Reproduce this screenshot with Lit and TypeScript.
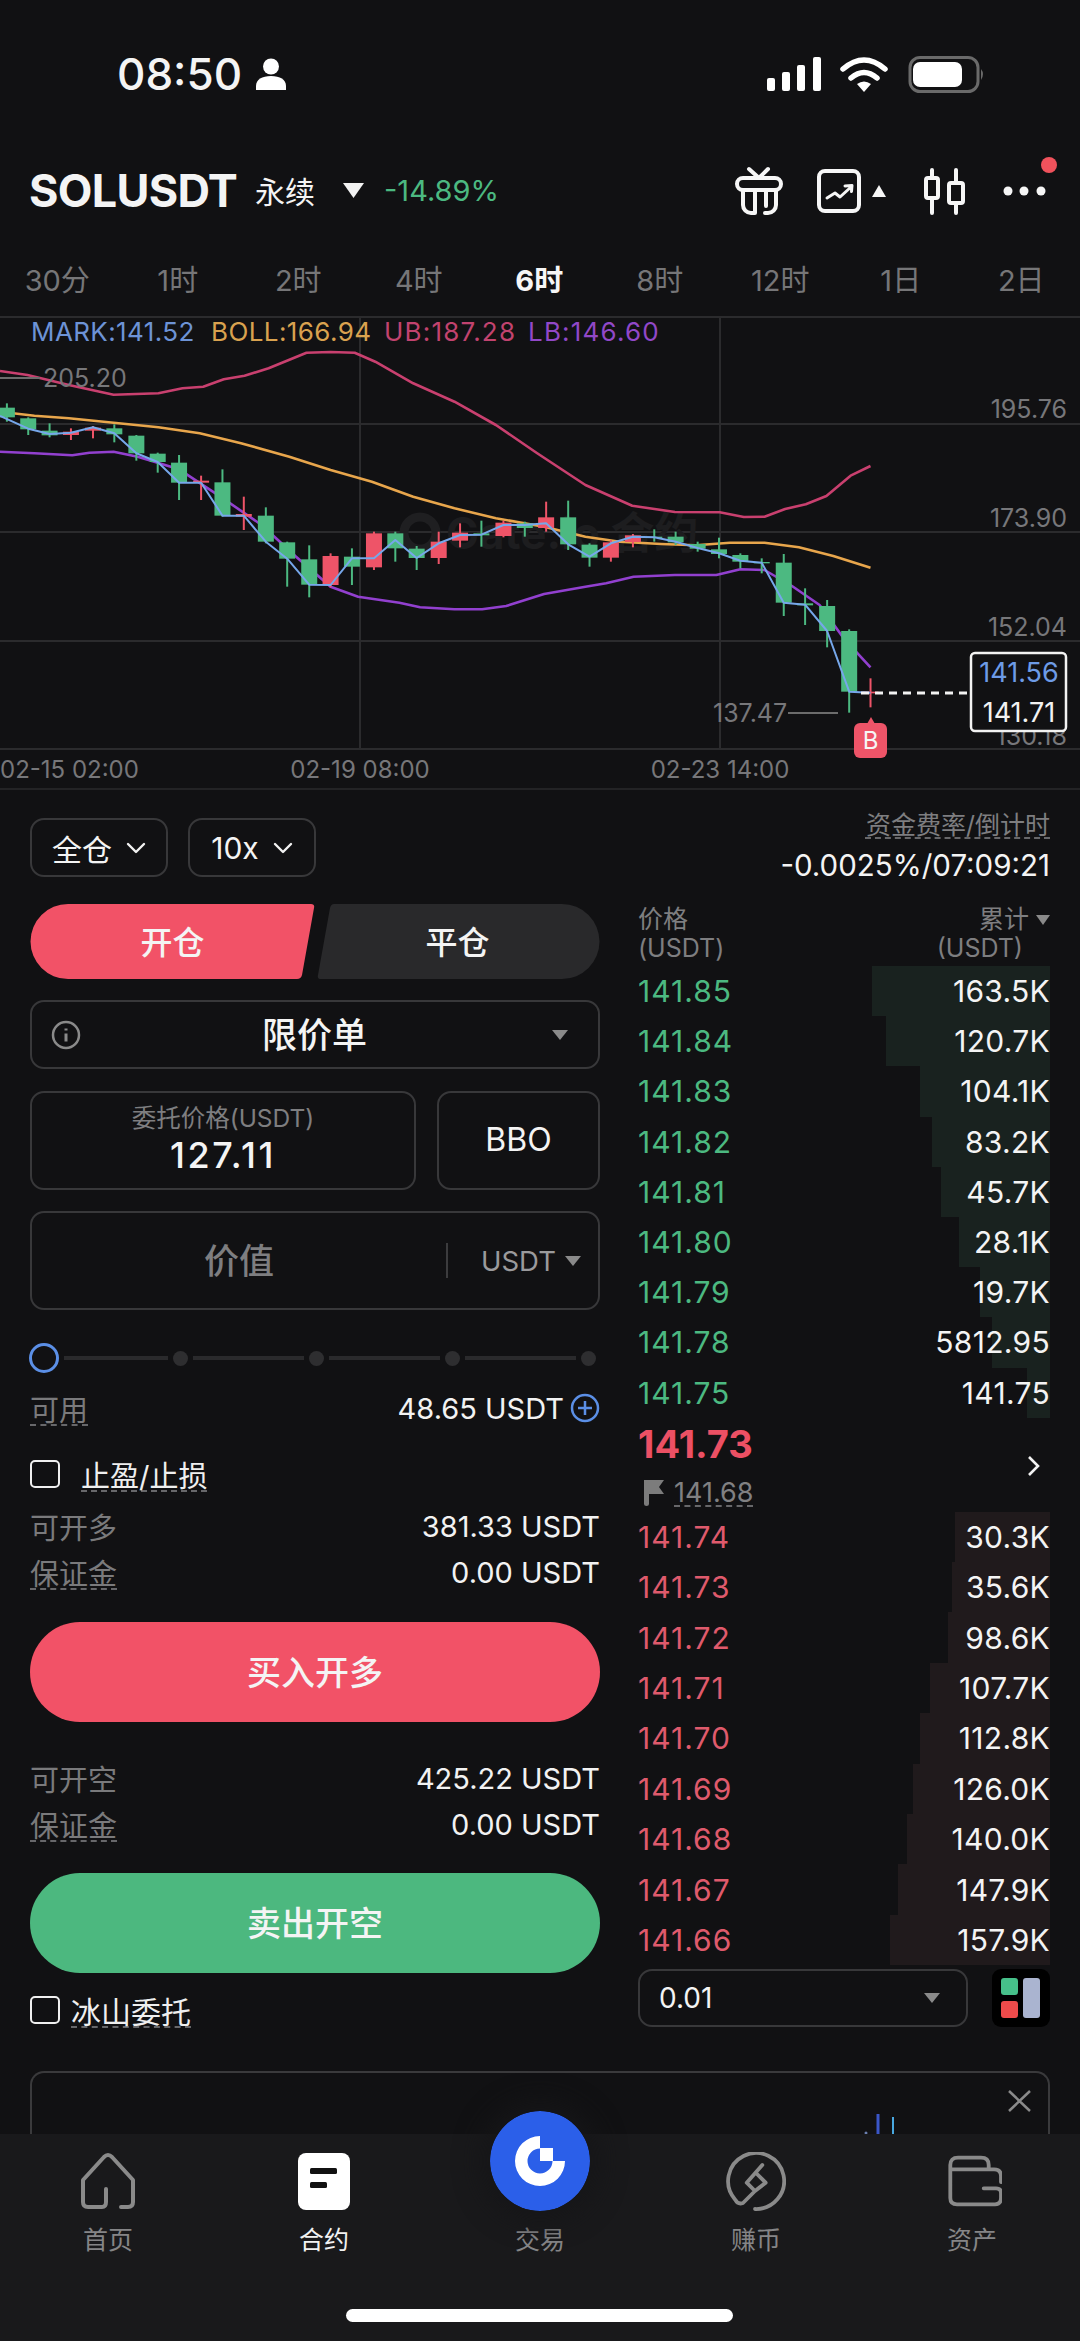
import { LitElement, html, css, svg } from 'lit';
import { customElement } from 'lit/decorators.js';

// Chart data was read off a crop: x in crop px (1.452 per px), y in crop px (3 per px, from y=310)
const cx = (x: number) => x / 1.452;
const cy = (y: number) => 310 + y / 3;
const pts = (list: number[][]) => list.map(([x, y]) => `${cx(x).toFixed(1)},${cy(y).toFixed(1)}`).join(' ');

const UP = '#4cb981';
const DOWN = '#ee5468';

// x, high, body top, body bottom, low, colour
const CANDLES: [number, number, number, number, number, string][] = [
  [10, 280, 293, 322, 335, UP], [41, 322, 325, 358, 375, UP], [72, 340, 362, 376, 382, UP],
  [103, 355, 365, 375, 390, DOWN], [135, 348, 353, 362, 385, DOWN], [166, 343, 355, 373, 397, UP],
  [198, 375, 377, 430, 452, UP], [229, 428, 431, 456, 488, UP], [260, 435, 458, 518, 570, UP],
  [292, 497, 512, 518, 570, DOWN], [323, 478, 517, 617, 620, UP], [354, 560, 612, 620, 660, DOWN],
  [386, 592, 617, 695, 700, UP], [417, 695, 697, 746, 830, UP], [449, 706, 748, 824, 862, UP],
  [480, 730, 738, 825, 832, DOWN], [511, 715, 740, 770, 825, UP], [543, 665, 670, 772, 780, DOWN],
  [574, 665, 670, 715, 755, UP], [605, 708, 716, 744, 780, UP], [637, 665, 695, 744, 762, DOWN],
  [668, 640, 668, 692, 712, DOWN], [699, 632, 670, 676, 710, UP], [731, 632, 638, 678, 682, DOWN],
  [762, 635, 640, 654, 680, UP], [793, 575, 622, 654, 665, DOWN], [825, 572, 622, 703, 720, UP],
  [856, 700, 704, 743, 770, UP], [887, 690, 697, 743, 755, DOWN], [919, 672, 676, 696, 712, DOWN],
  [950, 658, 680, 684, 695, UP], [981, 665, 680, 697, 705, UP], [1013, 695, 702, 716, 725, UP],
  [1044, 683, 718, 732, 745, UP], [1075, 730, 735, 755, 775, UP], [1106, 745, 756, 760, 790, UP],
  [1138, 732, 758, 878, 918, UP], [1169, 835, 880, 886, 945, UP], [1201, 870, 888, 963, 1012, UP],
  [1233, 958, 963, 1145, 1208, UP], [1264, 1105, 1145, 1150, 1192, DOWN],
];

const UB_LINE = [[0,183],[40,195],[100,225],[165,254],[230,250],[265,235],[295,230],[325,208],[355,197],[390,175],[445,128],[480,126],[515,128],[545,155],[600,220],[660,275],[720,345],[780,430],[850,525],[918,587],[980,606],[1045,607],[1080,621],[1110,620],[1140,597],[1170,583],[1200,558],[1235,497],[1264,468]];
const BOLL_LINE = [[0,305],[50,317],[100,325],[165,338],[230,352],[290,370],[350,400],[420,440],[480,480],[540,515],[600,560],[660,595],[720,625],[790,650],[850,680],[900,695],[960,702],[1010,706],[1060,698],[1110,698],[1160,712],[1210,738],[1264,773]];
const LB_LINE = [[0,425],[50,430],[105,436],[130,428],[165,425],[200,440],[260,478],[320,560],[380,645],[430,740],[480,830],[520,860],[580,878],[610,892],[660,898],[700,898],[735,888],[790,852],[850,830],[880,820],[920,800],[980,795],[1040,795],[1075,778],[1110,780],[1150,828],[1190,885],[1225,985],[1264,1072]];
const MARK_LINE = [[0,318],[41,356],[72,372],[103,368],[135,352],[166,370],[198,430],[229,456],[260,518],[292,518],[323,617],[354,617],[386,695],[417,746],[449,824],[480,825],[511,745],[543,745],[574,690],[605,744],[637,700],[668,675],[699,674],[731,645],[762,645],[793,640],[825,703],[856,740],[887,700],[919,680],[950,682],[981,695],[1013,714],[1044,730],[1075,752],[1106,758],[1138,878],[1169,884],[1201,963],[1233,1145],[1264,1148]];

const TIMEFRAMES = ['30分', '1时', '2时', '4时', '6时', '8时', '12时', '1日', '2日'];

const ASKS: [string, string, number][] = [
  ['141.85', '163.5K', 872], ['141.84', '120.7K', 886], ['141.83', '104.1K', 920],
  ['141.82', '83.2K', 932], ['141.81', '45.7K', 941], ['141.80', '28.1K', 959],
  ['141.79', '19.7K', 980], ['141.78', '5812.95', 992], ['141.75', '141.75', 1027],
];
const BIDS: [string, string, number][] = [
  ['141.74', '30.3K', 955], ['141.73', '35.6K', 952], ['141.72', '98.6K', 948],
  ['141.71', '107.7K', 930], ['141.70', '112.8K', 920], ['141.69', '126.0K', 913],
  ['141.68', '140.0K', 907], ['141.67', '147.9K', 898], ['141.66', '157.9K', 890],
];

const chevron = html`<svg class="chev" viewBox="0 0 20 12"><path d="M2 2l8 8 8-8" fill="none" stroke="#f2f2f2" stroke-width="2.4" stroke-linecap="round" stroke-linejoin="round"/></svg>`;

@customElement('app-root')
export class AppRoot extends LitElement {
  private _chart() {
    return html`<svg class="chart" viewBox="0 316 1080 474">
      ${[317, 424, 532, 641, 749].map((y) => svg`<line x1="0" x2="1080" y1=${y} y2=${y} stroke="#2b2b2d" stroke-width="2"/>`)}
      ${[360, 720].map((x) => svg`<line x1=${x} x2=${x} y1="317" y2="749" stroke="#2b2b2d" stroke-width="2"/>`)}
      <line x1="0" x2="1080" y1="789" y2="789" stroke="#232325" stroke-width="2"/>

      <circle cx="420" cy="533" r="16" fill="none" stroke="#1f1f21" stroke-width="9"/>
      <text x="446" y="549" class="wm">Gate.io 合约</text>

      <polyline points=${pts(UB_LINE)} fill="none" stroke="#c9406f" stroke-width="2.6" stroke-linejoin="round"/>
      <polyline points=${pts(LB_LINE)} fill="none" stroke="#9240cf" stroke-width="2.6" stroke-linejoin="round"/>
      <polyline points=${pts(BOLL_LINE)} fill="none" stroke="#e8a64c" stroke-width="2.6" stroke-linejoin="round"/>
      ${CANDLES.map(([x, hi, top, bot, lo, c]) => svg`
        <line x1=${cx(x)} x2=${cx(x)} y1=${cy(hi)} y2=${cy(lo)} stroke=${c} stroke-width="2"/>
        <rect x=${cx(x) - 8} y=${cy(top)} width="16" height=${(bot - top) / 3} fill=${c}/>`)}
      <polyline points=${pts(MARK_LINE)} fill="none" stroke="#76a7ea" stroke-width="2" stroke-linejoin="round"/>

      <text y="341" class="lg"><tspan x="31" fill="#6d93d6">MARK:141.52</tspan><tspan x="211" fill="#d9a24f">BOLL:166.94</tspan><tspan x="384" fill="#c2436f" class="wide">UB:187.28</tspan><tspan x="528" fill="#9148c8" class="wide">LB:146.60</tspan></text>

      <line x1="0" x2="40" y1="378" y2="378" stroke="#6c6c6c" stroke-width="2"/>
      <text x="43" y="387" class="ax">205.20</text>
      <text x="1067" y="418" class="ax end">195.76</text>
      <text x="1067" y="527" class="ax end">173.90</text>
      <text x="1067" y="636" class="ax end">152.04</text>
      <text x="1067" y="745" class="ax end">130.18</text>
      <text x="713" y="722" class="ax">137.47</text>
      <line x1="788" x2="838" y1="713" y2="713" stroke="#6c6c6c" stroke-width="2"/>

      <text x="0" y="778" class="dt">02-15 02:00</text>
      <text x="360" y="778" class="dt mid">02-19 08:00</text>
      <text x="720" y="778" class="dt mid">02-23 14:00</text>

      <line x1="861" x2="970" y1="693" y2="693" stroke="#f2f2f2" stroke-width="3" stroke-dasharray="8 6"/>
      <rect x="971" y="653" width="95" height="78" rx="4" fill="#111113" stroke="#f2f2f2" stroke-width="2.5"/>
      <text x="1019" y="682" class="box mid" fill="#6d9be6">141.56</text>
      <text x="1019" y="722" class="box mid" fill="#f2f2f2">141.71</text>

      <path d="M871 717l4 7h-8z" fill="#ee5468"/>
      <rect x="854" y="723" width="33" height="35" rx="6" fill="#ee5468"/>
      <text x="870.5" y="749" class="badge">B</text>
    </svg>`;
  }

  private _row(r: [string, string, number], side: string) {
    return html`<div class="ob-row ${side}">
      <span class="ob-bar" style="width:${1050 - r[2]}px"></span>
      <span class="ob-price">${r[0]}</span>
      <span class="ob-total">${r[1]}</span>
    </div>`;
  }

  protected override render() {
    return html`
      <div class="status">
        <span class="clock">08:50</span>
        <svg class="person" viewBox="0 0 30 32"><circle cx="15" cy="8.5" r="8"/><path d="M0 32v-4c0-6.5 6-10 15-10s15 3.500 15 10v4z"/></svg>
        <svg class="sys" viewBox="760 50 230 44">
          <rect x="767" y="76" width="8" height="13" rx="2" fill="#fff"/>
          <rect x="782" y="70" width="8" height="19" rx="2" fill="#fff"/>
          <rect x="797" y="63" width="8" height="26" rx="2" fill="#fff"/>
          <rect x="813" y="55" width="8" height="34" rx="2" fill="#fff"/>
          <path d="M843 67q21-18 42 0M851 76q13-11 26 0" fill="none" stroke="#fff" stroke-width="5.500" stroke-linecap="round"/>
          <path d="M864 90l-7-8q7-5 14 0z" fill="#fff"/>
          <rect x="910" y="55.500" width="68" height="34" rx="10" fill="none" stroke="#6a6a6a" stroke-width="3"/>
          <rect x="913" y="60" width="49" height="25" rx="7" fill="#fff"/>
          <path d="M981 67q4 5 0 11z" fill="#6a6a6a"/>
        </svg>
      </div>

      <div class="head">
        <span class="sym">SOLUSDT</span>
        <span class="perp">永续</span>
        <svg class="tri-down" viewBox="0 0 21 15"><path d="M0 0h21L10.500 15z" fill="#f2f2f2"/></svg>
        <span class="chg">-14.89%</span>
        <svg class="tools" viewBox="730 150 330 70" fill="none" stroke="#f6f6f6" stroke-width="4" stroke-linecap="round" stroke-linejoin="round">
          <path d="M749 169l10 9 9-9"/>
          <rect x="737" y="178" width="44" height="12" rx="6"/>
          <path d="M743 190v15a8 8 0 0 0 8 8h4v-21M776 190v15a8 8 0 0 1-8 8h-3M766 192v14"/>
          <rect x="819" y="171" width="40" height="40" rx="6"/>
          <path d="M827 198l8-5 5 4 11-10M845 186l7-.5-.5 6" stroke-width="3"/>
          <path d="M872 197l7-12 7 12z" fill="#f6f6f6" stroke="none"/>
          <path d="M932 170v8M932 198v15M956 170v13M956 203v10"/>
          <rect x="926" y="178" width="12" height="20" rx="2"/>
          <rect x="949" y="183" width="14" height="20" rx="2"/>
          <g fill="#f6f6f6" stroke="none"><circle cx="1008" cy="191" r="4.500"/><circle cx="1024" cy="191" r="4.500"/><circle cx="1041" cy="191" r="4.500"/></g>
          <circle cx="1049" cy="165" r="8" fill="#f0525c" stroke="none"/>
        </svg>
      </div>

      <div class="frames">
        ${TIMEFRAMES.map((t) => html`<span class=${t === '6时' ? 'on' : ''}>${t}</span>`)}
      </div>

      ${this._chart()}

      <div class="main">
        <div class="left">
          <div class="pills">
            <div class="pill p1">全仓 ${chevron}</div>
            <div class="pill p2">10x ${chevron}</div>
          </div>

          <div class="side">
            <svg viewBox="0 0 570 75">
              <path d="M38 0H281q4 0 3 4l-12 67q-1 4-5 4H38A37.500 37.500 0 0 1 38 0z" fill="#f25267"/>
              <path d="M304 0H532A37.500 37.500 0 0 1 532 75H291q-4 0-3-4l12-67q1-4 4-4z" fill="#29292b"/>
            </svg>
            <span>开仓</span><span>平仓</span>
          </div>

          <div class="box otype">
            <svg class="info" viewBox="0 0 30 30" fill="none" stroke="#8a8a8a" stroke-width="2.500"><circle cx="15" cy="15" r="13"/><path d="M15 13.500v8M15 8.500v2" stroke-width="3"/></svg>
            <span>限价单</span>
            <i class="tri"></i>
          </div>

          <div class="prow">
            <div class="box price"><small>委托价格(USDT)</small><b>127.11</b></div>
            <div class="box bbo">BBO</div>
          </div>

          <div class="box value">
            <span class="vlabel">价值</span>
            <span class="vunit">USDT<i class="tri"></i></span>
          </div>

          <div class="slider">
            <i class="knob"></i><i class="ln"></i><i class="dot"></i><i class="ln"></i><i class="dot"></i><i class="ln"></i><i class="dot"></i><i class="ln"></i><i class="dot"></i>
          </div>

          <div class="kv avail">
            <span class="k dash">可用</span>
            <span class="v"><span>48.65 USDT</span><svg class="plus" viewBox="0 0 30 30" fill="none" stroke="#5b8fe6" stroke-width="2.500"><circle cx="15" cy="15" r="13"/><path d="M8 15h14M15 8v14"/></svg></span>
          </div>

          <label class="check tp"><i class="cb"></i><span class="dash lite">止盈/止损</span></label>

          <div class="kv first"><span class="k">可开多</span><span class="v">381.33 USDT</span></div>
          <div class="kv"><span class="k dash">保证金</span><span class="v">0.00 USDT</span></div>
          <div class="cta buy"><span>买入开多</span></div>

          <div class="kv first2"><span class="k">可开空</span><span class="v">425.22 USDT</span></div>
          <div class="kv"><span class="k dash">保证金</span><span class="v">0.00 USDT</span></div>
          <div class="cta sell"><span>卖出开空</span></div>

          <label class="check ice"><i class="cb"></i><span class="dash lite">冰山委托</span></label>
        </div>

        <div class="right">
          <div class="fund"><span class="dash">资金费率/倒计时</span></div>
          <div class="fund-v">-0.0025%/07:09:21</div>
          <div class="ob-head">
            <div>价格<br />(USDT)</div>
            <div class="ob-head-r"><span>累计 <i class="tri"></i></span><span class="u">(USDT)</span></div>
          </div>
          ${ASKS.map((r) => this._row(r, 'ask'))}
          <div class="last">
            <span>141.73</span>
            <svg class="go" viewBox="0 0 14 22"><path d="M2 2l9 9-9 9" fill="none" stroke="#f2f2f2" stroke-width="2.600"/></svg>
          </div>
          <div class="mark">
            <svg viewBox="0 0 21 26"><path d="M1 0h20l-5 7 5 7H6v10q0 2-2.500 2T1 24z" fill="#7c7c7c"/></svg>
            <span class="dash">141.68</span>
          </div>
          ${BIDS.map((r) => this._row(r, 'bid'))}
          <div class="depth">
            <div class="box step"><span>0.01</span><i class="tri"></i></div>
            <svg class="layout" viewBox="0 0 58 58">
              <rect width="58" height="58" rx="9" fill="#000"/>
              <rect x="9" y="9" width="17" height="17" rx="3" fill="#46c08a"/>
              <rect x="9" y="32" width="17" height="17" rx="3" fill="#ee4b4b"/>
              <rect x="31" y="9" width="17" height="40" rx="3" fill="#aab4d0"/>
            </svg>
          </div>
        </div>
      </div>

      <div class="banner">
        <svg viewBox="0 0 1018 63">
          <path d="M979 20l21 20M1000 20l-21 20" fill="none" stroke="#8a8a8a" stroke-width="2.500"/>
          <path d="M848 63V43" stroke="#3a56c8" stroke-width="3"/>
          <path d="M863 63V46" stroke="#48a8e0" stroke-width="2"/>
          <circle cx="836" cy="62" r="1.500" fill="#6a7fb0"/>
        </svg>
      </div>

      <div class="nav">
        <div class="nav-item">
          <svg class="ni" viewBox="0 0 60 60" fill="none" stroke="#8a8a8a" stroke-width="4" stroke-linecap="round" stroke-linejoin="round">
            <path d="M28 37v13q0 5-4 5H10q-5 0-5-5V28L26 5q4-4 8 0l21 23v22q0 5-5 5h-7"/>
          </svg>
          <span>首页</span>
        </div>
        <div class="nav-item on">
          <svg class="ni" viewBox="0 0 60 60"><rect x="4" y="1" width="52" height="57" rx="8" fill="#fff"/><rect x="16" y="16" width="27" height="6" rx="1.500" fill="#111"/><rect x="16" y="30" width="17" height="6" rx="1.500" fill="#111"/></svg>
          <span>合约</span>
        </div>
        <div class="nav-item trade">
          <svg class="fab" viewBox="0 0 100 100">
            <circle cx="50" cy="50" r="50" fill="#2b5fe9"/>
            <path d="M50 25A25 25 0 1 0 75 50H62.500A12.500 12.500 0 1 1 50 37.500z" fill="#fff"/>
            <rect x="50" y="37" width="13" height="13" fill="#fff"/>
          </svg>
          <span>交易</span>
        </div>
        <div class="nav-item">
          <svg class="ni" viewBox="0 0 60 60" fill="none" stroke="#8a8a8a" stroke-width="3.800" stroke-linecap="round" stroke-linejoin="round">
            <path d="M29 57A28 28 0 1 0 9 47.400Q12 53 17 51L29 39 20.700 30.700 36.300 13M29 39L39.700 30.700 30 21"/>
          </svg>
          <span>赚币</span>
        </div>
        <div class="nav-item">
          <svg class="ni" viewBox="0 0 60 60" fill="none" stroke="#8a8a8a" stroke-width="3.800" stroke-linecap="round" stroke-linejoin="round">
            <path d="M8.300 17.300V13Q8.300 5.700 16 5.700H39Q46.700 5.700 46.700 13V17.300M8.300 17.300V46Q8.300 52.300 15 52.300H53Q59 52.300 59 46V41Q59 36.300 54 36.300H41.700M8.300 17.300H52Q59 17.300 59 24V30"/>
          </svg>
          <span>资产</span>
        </div>
        <div class="home-bar"></div>
      </div>
    `;
  }

  static override styles = css`
    :host {
      display: block;
      width: 1080px;
      height: 2341px;
      overflow: hidden;
      background: #111113;
      color: #f4f4f4;
      font-family: Inter, 'Noto Sans CJK SC', sans-serif;
    }
    svg {
      display: block;
    }

    .status {
      height: 148px;
      display: flex;
      align-items: center;
      padding-left: 117px;
    }
    .clock {
      font-size: 44px;
      font-weight: 500;
      width: 139px;
    }
    .person {
      width: 30px;
      height: 32px;
      fill: #fff;
    }
    .sys {
      width: 230px;
      height: 44px;
      margin-left: 474px;
    }

    .head {
      height: 84px;
      display: flex;
      align-items: center;
      padding-left: 29px;
    }
    .sym {
      font-size: 45px;
      font-weight: 700;
      letter-spacing: -0.7px;
      width: 226px;
    }
    .perp {
      font-size: 30px;
      width: 88px;
    }
    .tri-down {
      width: 21px;
      height: 15px;
    }
    .chg {
      margin-left: 20px;
      font-size: 29px;
      color: #4cb981;
      width: 116px;
    }
    .tools {
      width: 330px;
      height: 70px;
      margin: -10px 0 0 230px;
      overflow: visible;
    }

    .frames {
      height: 70px;
      margin: 11px 0 3px -3px;
      display: grid;
      grid-template-columns: repeat(9, 120.5px);
      align-items: center;
      justify-items: center;
      font-size: 29px;
      color: #767678;
    }
    .frames .on {
      color: #f6f6f6;
      font-weight: 700;
    }

    .chart {
      width: 1080px;
      height: 474px;
    }
    .lg {
      font-size: 26px;
      letter-spacing: 0.4px;
    }
    .wide {
      letter-spacing: 1.2px;
    }
    .ax {
      font-size: 25px;
      fill: #77777a;
    }
    .dt {
      font-size: 24px;
      fill: #77777a;
    }
    .end {
      text-anchor: end;
    }
    .mid {
      text-anchor: middle;
    }
    .wm {
      font-size: 44px;
      font-weight: 700;
      fill: #1d1d1f;
    }
    .box {
      font-size: 27px;
    }
    .badge {
      font-size: 24px;
      fill: #f6f6f6;
      text-anchor: middle;
    }

    .main {
      display: flex;
      gap: 38px;
      padding: 0 30px;
    }
    .left {
      width: 570px;
      padding-top: 28px;
    }
    .right {
      width: 412px;
      padding-top: 15px;
    }

    .pills {
      display: flex;
      gap: 20px;
    }
    .pill,
    div.box {
      border: 2px solid #38383a;
      border-radius: 14px;
      box-sizing: border-box;
      display: flex;
      align-items: center;
    }
    .pill {
      height: 59px;
      font-size: 30px;
      justify-content: center;
      gap: 14px;
    }
    .p1 {
      width: 138px;
    }
    .p2 {
      width: 128px;
    }
    .chev {
      width: 20px;
      height: 12px;
    }

    .side {
      position: relative;
      margin-top: 27px;
      height: 75px;
      display: flex;
      align-items: center;
      font-size: 32px;
      font-weight: 500;
    }
    .side svg {
      position: absolute;
      inset: 0;
      width: 570px;
      height: 75px;
    }
    .side span {
      position: relative;
      width: 285px;
      text-align: center;
      padding-bottom: 4px;
    }

    .otype {
      margin-top: 21px;
      height: 69px;
      padding: 0 30px 0 19px;
      justify-content: space-between;
      font-size: 35px;
      font-weight: 500;
    }
    .otype span {
      padding-bottom: 4px;
      margin-right: 4px;
    }
    .info {
      width: 30px;
      height: 30px;
    }
    i.tri {
      display: inline-block;
      width: 0;
      height: 0;
      border-left: 8px solid transparent;
      border-right: 8px solid transparent;
      border-top: 10px solid #8a8a8a;
    }

    .prow {
      margin-top: 22px;
      display: flex;
      gap: 21px;
    }
    .price {
      width: 386px;
      height: 99px;
      flex-direction: column;
      justify-content: center;
    }
    .price small {
      font-size: 24.500px;
      line-height: 32px;
      color: #7e7e80;
      margin-top: -3px;
    }
    .price b {
      font-size: 36px;
      line-height: 42px;
      font-weight: 500;
      letter-spacing: 2.500px;
    }
    .bbo {
      width: 163px;
      height: 99px;
      justify-content: center;
      font-size: 32px;
      padding-bottom: 2px;
    }

    .value {
      margin-top: 21px;
      height: 99px;
      position: relative;
    }
    .vlabel {
      width: 414px;
      text-align: center;
      font-size: 35px;
      font-weight: 500;
      color: #7e7e80;
      padding-bottom: 4px;
    }
    .vunit {
      border-left: 2px solid #3c3c3e;
      height: 35px;
      display: flex;
      align-items: center;
      gap: 9px;
      padding-left: 33px;
      font-size: 27.500px;
      color: #9a9a9c;
    }

    .slider {
      margin: 33px 0 0 -1px;
      height: 30px;
      display: flex;
      align-items: center;
      gap: 5px;
    }
    .knob {
      width: 30px;
      height: 30px;
      box-sizing: border-box;
      border: 3px solid #5b8fe6;
      border-radius: 50%;
    }
    .ln {
      width: 111px;
      height: 4px;
      background: #2a2a2c;
    }
    .knob + .ln {
      width: 104px;
    }
    .dot {
      width: 15px;
      height: 15px;
      border-radius: 50%;
      background: #2e2e30;
    }

    .kv {
      height: 46px;
      display: flex;
      align-items: center;
      justify-content: space-between;
      font-size: 29px;
    }
    .k {
      color: #7a7a7c;
    }
    .v {
      display: flex;
      align-items: center;
      gap: 6px;
      color: #f2f2f2;
      font-size: 29px;
    }
    .avail {
      margin-top: 12px;
    }
    .first {
      margin-top: 9px;
    }
    .first2 {
      margin-top: 33px;
    }
    .plus {
      width: 30px;
      height: 30px;
    }
    .dash {
      text-decoration: underline dashed #67676a 2px;
      text-underline-offset: 3px;
      text-decoration-skip-ink: none;
    }
    .lite {
      color: #efefef;
    }

    .check {
      display: flex;
      align-items: center;
      height: 40px;
      font-size: 29px;
    }
    .cb {
      width: 30px;
      height: 28px;
      box-sizing: border-box;
      border: 2.500px solid #f0f0f0;
      border-radius: 5px;
    }
    .tp {
      margin-top: 23px;
      gap: 21px;
    }
    .ice {
      margin-top: 17px;
      gap: 11px;
      font-size: 30px;
    }

    .cta {
      height: 100px;
      border-radius: 50px;
      display: flex;
      align-items: center;
      justify-content: center;
      font-size: 34px;
      font-weight: 500;
      margin-top: 27px;
    }
    .cta span {
      padding-bottom: 4px;
    }
    .buy {
      background: #f25267;
    }
    .sell {
      background: #4cb87f;
      margin-top: 26px;
    }

    .fund {
      height: 40px;
      text-align: right;
      font-size: 25px;
      color: #7e7e80;
    }
    .fund-v {
      height: 41px;
      line-height: 41px;
      text-align: right;
      font-size: 29.500px;
    }
    .ob-head {
      margin-top: 19px;
      height: 61px;
      display: flex;
      justify-content: space-between;
      font-size: 25px;
      line-height: 29px;
      color: #7e7e80;
    }
    .ob-head-r {
      display: flex;
      flex-direction: column;
      align-items: flex-end;
    }
    .ob-head-r i.tri {
      border-left-width: 7px;
      border-right-width: 7px;
      vertical-align: 3px;
    }
    .ob-head-r .u {
      margin-right: 27px;
    }
    .ob-row {
      position: relative;
      height: 50.200px;
      display: flex;
      align-items: center;
      justify-content: space-between;
      font-size: 30px;
    }
    .ob-row.bid {
      height: 50.400px;
    }
    .ob-bar {
      position: absolute;
      right: 0;
      top: 0;
      bottom: 0;
      background: #19221f;
    }
    .bid .ob-bar {
      background: #201a1c;
    }
    .ob-price,
    .ob-total {
      position: relative;
    }
    .ob-price {
      letter-spacing: 1px;
    }
    .ob-total {
      letter-spacing: 0.3px;
    }
    .ask .ob-price {
      color: #4cb981;
    }
    .bid .ob-price {
      color: #df5a6c;
    }
    .last {
      height: 52px;
      display: flex;
      align-items: center;
      justify-content: space-between;
      font-size: 38px;
      font-weight: 700;
      color: #ec5064;
      padding-right: 9px;
    }
    .go {
      width: 14px;
      height: 22px;
      margin-top: 44px;
    }
    .mark {
      height: 42px;
      box-sizing: border-box;
      padding: 4px 0 0 5px;
      display: flex;
      align-items: center;
      gap: 10px;
      font-size: 27px;
      color: #808082;
    }
    .mark svg {
      width: 21px;
      height: 26px;
    }
    .depth {
      margin-top: 4px;
      display: flex;
      justify-content: space-between;
    }
    .step {
      width: 330px;
      height: 58px;
      padding: 0 26px 0 19px;
      justify-content: space-between;
      font-size: 28px;
    }
    .layout {
      width: 58px;
      height: 58px;
    }

    .banner {
      margin: 41px 30px 0;
      height: 63px;
      box-sizing: border-box;
      border: 2px solid #3a3a3c;
      border-bottom: 0;
      border-radius: 14px 14px 0 0;
    }
    .banner svg {
      width: 1018px;
      height: 63px;
      margin: -2px 0 0 -2px;
      overflow: visible;
    }

    .nav {
      position: relative;
      height: 208px;
      background: #19191b;
      display: grid;
      grid-template-columns: repeat(5, 216px);
    }
    .nav-item {
      display: flex;
      flex-direction: column;
      align-items: center;
      padding-top: 18px;
      font-size: 25px;
      color: #858587;
    }
    .nav-item.on {
      color: #f2f2f2;
    }
    .ni {
      width: 60px;
      height: 60px;
      margin-bottom: 8px;
    }
    .trade {
      position: relative;
    }
    .fab {
      position: absolute;
      top: -23px;
      left: 58px;
      width: 100px;
      height: 100px;
      border-radius: 50%;
      box-shadow: 0 0 26px 10px #161618;
    }
    .trade span {
      margin-top: 68px;
    }
    .home-bar {
      position: absolute;
      left: 346px;
      top: 175px;
      width: 387px;
      height: 13px;
      border-radius: 7px;
      background: #fff;
    }
  `;
}

declare global {
  interface HTMLElementTagNameMap {
    'app-root': AppRoot;
  }
}
